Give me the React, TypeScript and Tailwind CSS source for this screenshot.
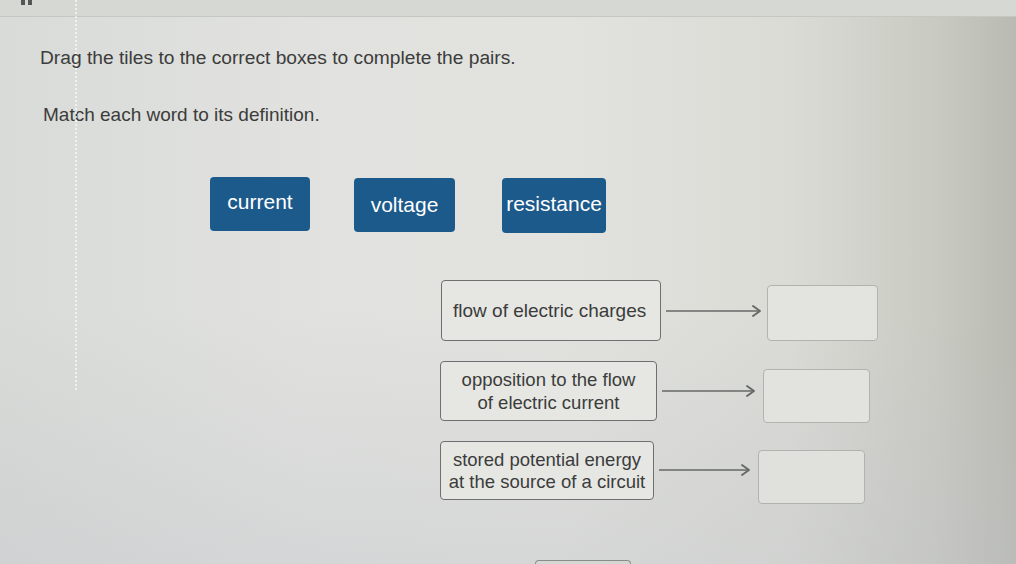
import React from "react";

function Arrow({ width }: { width: number }) {
  return (
    <svg width={width} height="14" viewBox={`0 0 ${width} 14`} className="shrink-0 block">
      <line x1="0" y1="7" x2={width - 2} y2="7" stroke="#666867" strokeWidth="1.7" />
      <polyline
        points={`${width - 9},2 ${width - 2},7 ${width - 9},12`}
        fill="none"
        stroke="#666867"
        strokeWidth="1.9"
        strokeLinejoin="round"
        strokeLinecap="round"
      />
    </svg>
  );
}

export default function App() {
  const font = { fontFamily: '"Liberation Sans", Arial, sans-serif' };
  return (
    <div
      className="relative w-[1016px] h-[564px] overflow-hidden text-[#3b3c3b] bg-[linear-gradient(90deg,#d9dbd8_0%,#e1e2df_30%,#e2e3de_55%,#dadbd5_78%,#c9cac2_92%,#b9bab1_100%)]"
      style={font}
    >
      <div className="absolute inset-0 bg-[linear-gradient(180deg,rgba(255,255,255,0)_55%,rgba(190,192,200,0.35)_100%)] pointer-events-none" />
      {/* top strip */}
      <div className="relative h-[17px] bg-[#d6d8d3] border-b border-[#c5c7c1] flex items-start pl-[21px]">
        <div className="flex gap-[3px] mt-[-1px]">
          <div className="w-[4px] h-[6px] bg-[#555]" />
          <div className="w-[4px] h-[6px] bg-[#555]" />
        </div>
      </div>

      <div className="relative">
        <p className="pl-[40px] pt-[30px] text-[19.2px] leading-[22px]">
          Drag the tiles to the correct boxes to complete the pairs.
        </p>
        <p className="pl-[43px] pt-[35px] text-[19px] leading-[22px]">
          Match each word to its definition.
        </p>

        <div className="flex items-start pl-[210px] pt-[51px]">
          <div className="w-[100px] h-[54px] rounded-[4px] bg-[#1c5a8b] text-white text-[21px] flex items-center justify-center pb-[5px]">
            current
          </div>
          <div className="ml-[44px] mt-[1px] w-[101px] h-[54px] rounded-[4px] bg-[#1c5a8b] text-white text-[21px] flex items-center justify-center">
            voltage
          </div>
          <div className="ml-[47px] mt-[1px] w-[104px] h-[55px] rounded-[4px] bg-[#1c5a8b] text-white text-[21px] flex items-center justify-center pb-[4px]">
            resistance
          </div>
        </div>

        <div className="flex flex-col pt-[47px] gap-[20px]">
          <div className="flex items-start ml-[441px]">
            <div className="w-[220px] h-[61px] rounded-[4px] border-[1.5px] border-[#6e706f] bg-[#e6e7e3] flex items-center pl-[11px] pt-[2px] text-[19px]">
              flow of electric charges
            </div>
            <div className="ml-[5px] mt-[24px]">
              <Arrow width={96} />
            </div>
            <div className="ml-[5px] mt-[5px] -mb-[10px] w-[111px] h-[56px] rounded-[4px] border-[1.5px] border-[#b2b3ae] bg-[#e3e4e0]" />
          </div>
          <div className="flex items-start ml-[440px]">
            <div className="w-[217px] h-[60px] rounded-[4px] border-[1.5px] border-[#6e706f] bg-[#e6e7e3] flex items-center justify-center text-center text-[18.5px] leading-[23px]">
              opposition to the flow
              <br />
              of electric current
            </div>
            <div className="ml-[5px] mt-[23px]">
              <Arrow width={94} />
            </div>
            <div className="ml-[7px] mt-[8px] -mb-[10px] w-[107px] h-[54px] rounded-[4px] border-[1.5px] border-[#b2b3ae] bg-[#e2e3df]" />
          </div>
          <div className="flex items-start ml-[440px]">
            <div className="w-[214px] h-[59px] rounded-[4px] border-[1.5px] border-[#6e706f] bg-[#e6e7e3] flex items-center justify-center text-center text-[18.5px] leading-[22px]">
              stored potential energy
              <br />
              at the source of a circuit
            </div>
            <div className="ml-[5px] mt-[22px]">
              <Arrow width={92} />
            </div>
            <div className="ml-[7px] mt-[9px] -mb-[10px] w-[107px] h-[54px] rounded-[4px] border-[1.5px] border-[#b2b3ae] bg-[#e0e1dc]" />
          </div>
        </div>

        <div className="ml-[535px] mt-[60px] w-[96px] h-[20px] rounded-t-[4px] border-t-[1.5px] border-x-[1.5px] border-[#8a8c88]" />
      </div>

      {/* screen reflection dotted line */}
      <div className="absolute left-[75px] top-0 h-[390px] border-l-[2px] border-dotted border-[rgba(255,255,255,0.6)] pointer-events-none" />
    </div>
  );
}
